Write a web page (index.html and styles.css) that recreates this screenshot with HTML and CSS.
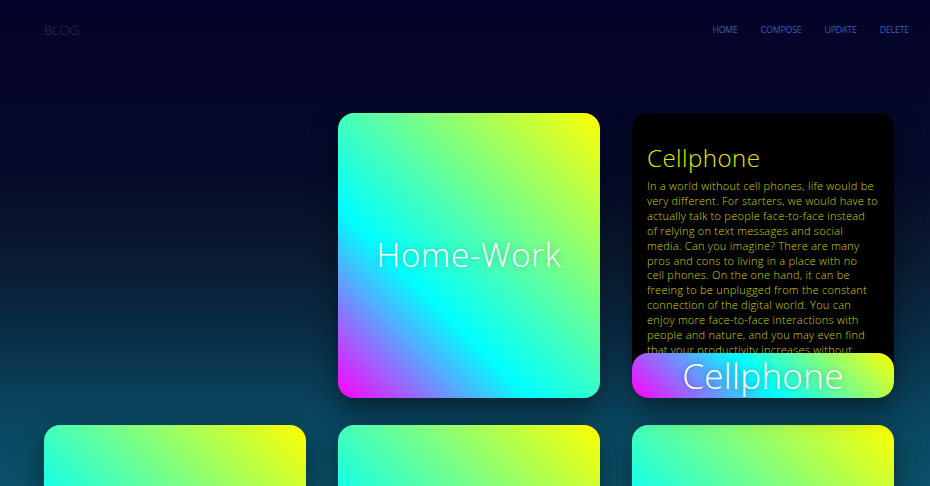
FILE: index.html
```html
<!DOCTYPE html>
<html lang="en">
<head>
<meta charset="utf-8">
<title>Blog</title>
<link rel="stylesheet" href="styles.css">
</head>
<body>
<header class="topbar">
  <a class="brand" href="#">BLOG</a>
  <nav class="menu">
    <a href="#">HOME</a>
    <a href="#">COMPOSE</a>
    <a href="#">UPDATE</a>
    <a href="#">DELETE</a>
  </nav>
</header>
<main class="grid">
  <div class="slot"></div>
  <article class="card card-grad">
    <h2 class="card-label">Home-Work</h2>
  </article>
  <article class="card card-post">
    <h3 class="post-title">Cellphone</h3>
    <p class="post-body">In a world without cell phones, life would be<br>very different. For starters, we would have to<br>actually talk to people face-to-face instead<br>of relying on text messages and social<br>media. Can you imagine? There are many<br>pros and cons to living in a place with no<br>cell phones. On the one hand, it can be<br>freeing to be unplugged from the constant<br>connection of the digital world. You can<br>enjoy more face-to-face interactions with<br>people and nature, and you may even find<br>that your productivity increases without<br>the constant distraction of notifications.</p>
    <div class="post-bar">Cellphone</div>
  </article>
  <article class="card card-grad"></article>
  <article class="card card-grad"></article>
  <article class="card card-grad"></article>
</main>
</body>
</html>
```
FILE: styles.css
```css
html {
  background: #fff;
}
body {
  margin: 0;
  height: 486px;
  font-family: "Open Sans", "Noto Sans", sans-serif;
  font-weight: 300;
  background: linear-gradient(180deg, #040228 0%, #060a2a 35%, #0a1a30 52%, #0a2c46 68%, #0a3f58 80%, #0a4862 88%, #0b5169 100%);
  overflow: hidden;
}
.topbar {
  height: 60px;
  display: flex;
  align-items: center;
  justify-content: space-between;
  padding: 0 21px 0 44px;
}
.brand {
  color: #30304e;
  font-size: 13.5px;
  text-decoration: none;
  letter-spacing: -0.1px;
}
.menu {
  display: flex;
  gap: 23px;
}
.menu a {
  color: #2a60bf;
  font-size: 8.8px;
  text-decoration: none;
  font-weight: 400;
  letter-spacing: -0.2px;
}
.grid {
  display: grid;
  grid-template-columns: repeat(3, 262px);
  grid-auto-rows: 285px;
  gap: 27px 32px;
  padding: 53px 0 0 44px;
}
.card {
  border-radius: 16px;
  overflow: hidden;
  box-shadow: 0 12px 28px rgba(0, 0, 0, 0.45);
}
.card-grad {
  background: linear-gradient(45deg, #ff00ff 0%, #00ffff 35%, #ffff00 100%);
  display: flex;
  align-items: center;
  justify-content: center;
}
.card-label {
  margin: 0;
  color: #fff;
  font-size: 33px;
  font-weight: 300;
  letter-spacing: 0.7px;
  text-shadow: 0 0 6px rgba(0, 0, 0, 0.25);
  padding-bottom: 2px;
}
.card-post {
  background: #000;
  position: relative;
  padding: 30px 8px 0 15px;
  box-sizing: border-box;
}
.post-title {
  margin: 0 0 6px;
  color: #eaea00;
  font-size: 24px;
  font-weight: 300;
  line-height: 30px;
  letter-spacing: 0.5px;
}
.post-body {
  margin: 0;
  color: #d2d200;
  font-size: 11px;
  line-height: 14.9px;
  letter-spacing: 0.25px;
  white-space: nowrap;
}
.post-bar {
  position: absolute;
  left: 0;
  right: 0;
  bottom: 0;
  height: 45px;
  border-radius: 16px;
  background: linear-gradient(45deg, #ff00ff 0%, #00ffff 48%, #ffff00 100%);
  color: #fff;
  font-size: 35px;
  line-height: 45px;
  text-align: center;
  letter-spacing: 0.3px;
  text-shadow: 0 0 6px rgba(0, 0, 0, 0.3);
}
```
